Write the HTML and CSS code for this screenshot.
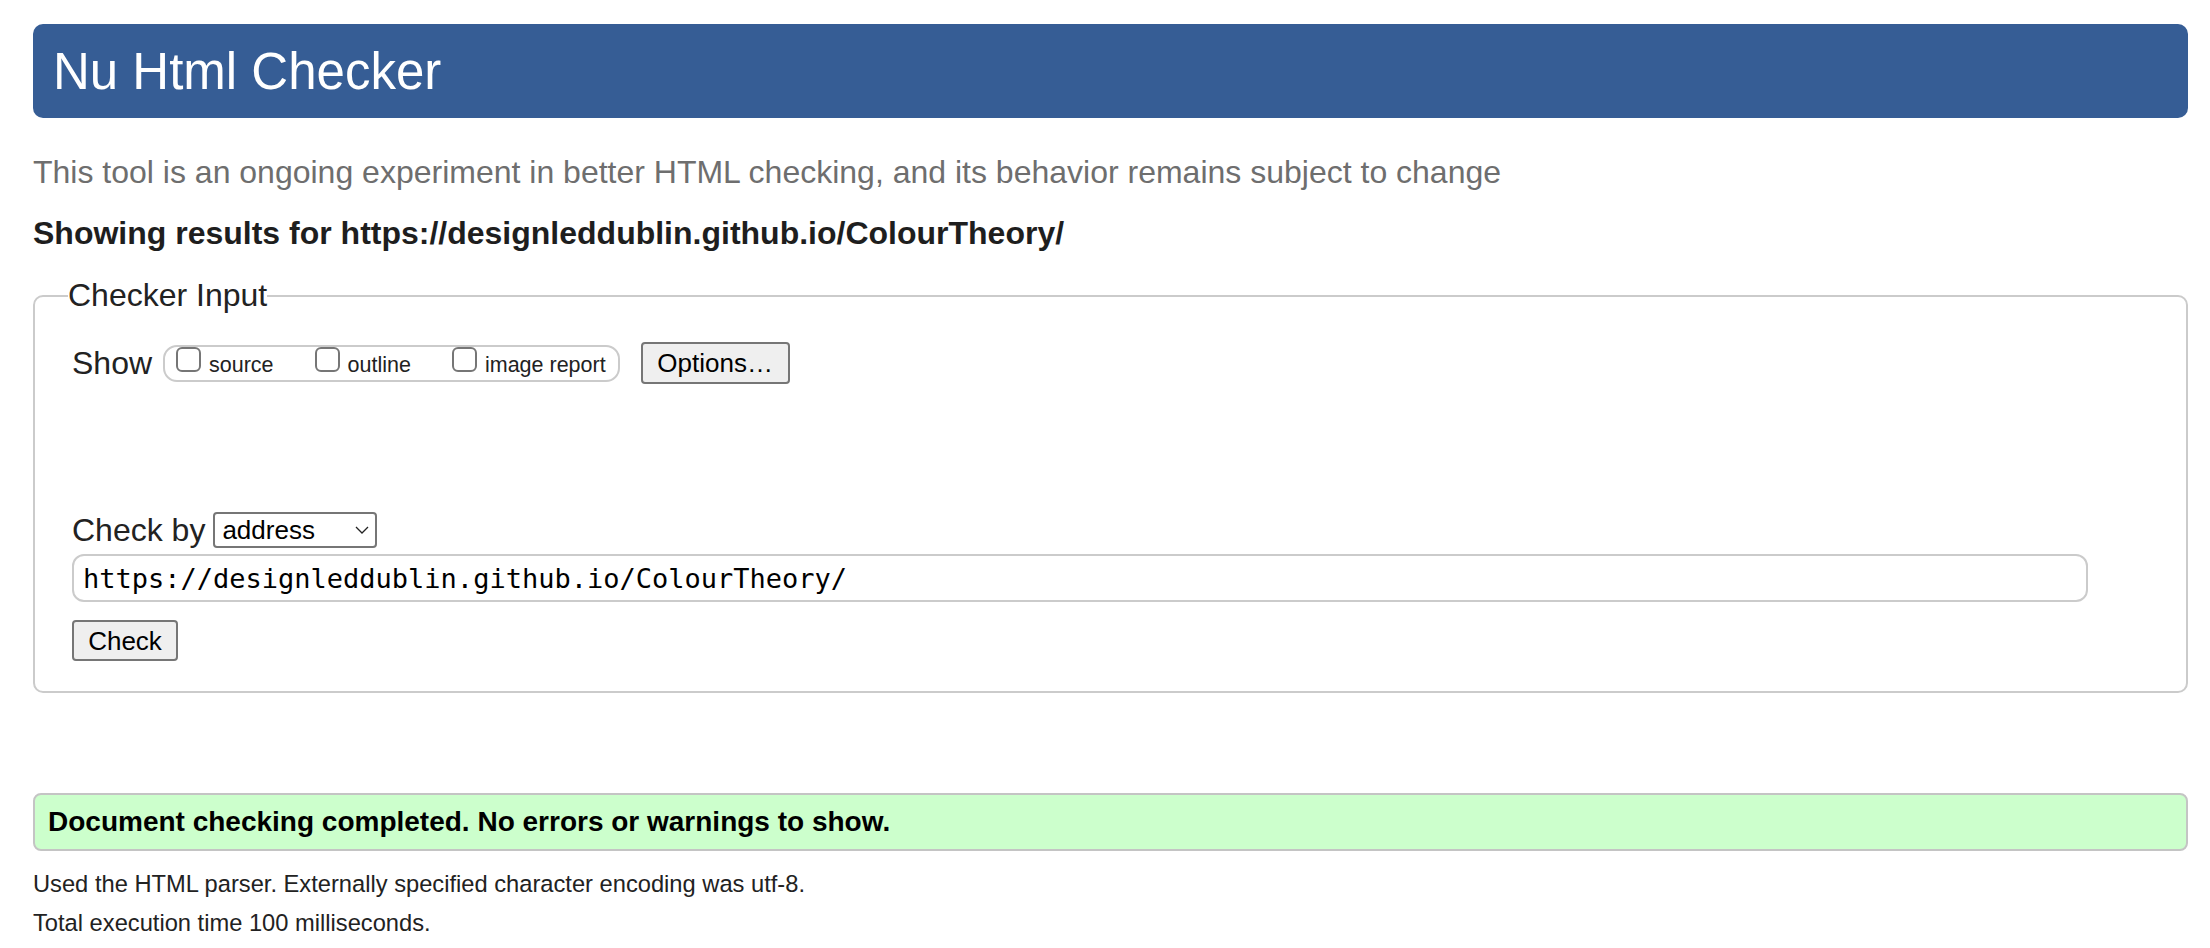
FILE: index.html
```html
<!DOCTYPE html>
<html lang="en">
<head>
<meta charset="utf-8">
<title>Showing results for https://designleddublin.github.io/ColourTheory/ - Nu Html Checker</title>
<link rel="stylesheet" href="styles.css">
</head>
<body>
<div class="page">
  <header class="banner"><h1 class="title">Nu Html Checker</h1></header>
  <p class="tagline">This tool is an ongoing experiment in better HTML checking, and its behavior remains subject to change</p>
  <h2 class="showing">Showing results for https://designleddublin.github.io/ColourTheory/</h2>
  <fieldset class="checker">
    <legend class="legend">Checker Input</legend>
    <div class="show-row">
      <span class="show-label">Show</span>
      <div class="opts">
        <label class="opt"><span class="cb"></span><span class="opt-text">source</span></label>
        <label class="opt"><span class="cb"></span><span class="opt-text">outline</span></label>
        <label class="opt"><span class="cb"></span><span class="opt-text">image report</span></label>
      </div>
      <button class="btn options-btn" type="button">Options…</button>
    </div>
    <div class="checkby-row">
      <span class="checkby-label">Check by</span>
      <div class="select">
        <span class="select-text">address</span>
        <svg class="chev" width="14" height="8" viewBox="0 0 14 8"><polyline points="1,1 7,7 13,1" fill="none" stroke="#222" stroke-width="1.3"/></svg>
      </div>
    </div>
    <div class="url">https://designleddublin.github.io/ColourTheory/</div>
    <button class="btn check-btn" type="button">Check</button>
  </fieldset>
  <div class="success">Document checking completed. No errors or warnings to show.</div>
  <p class="meta used">Used the HTML parser. Externally specified character encoding was utf-8.</p>
  <p class="meta total">Total execution time 100 milliseconds.</p>
</div>
</body>
</html>
```

FILE: styles.css
```css
html, body {
  margin: 0;
  padding: 0;
  background: #ffffff;
}
body {
  font-family: "Liberation Sans", Arial, Helvetica, sans-serif;
  color: #222222;
}
.page {
  padding: 24px 22px 0 33px;
  display: flex;
  flex-direction: column;
  align-items: stretch;
}
.banner {
  height: 94px;
  background: #365d95;
  border-radius: 10px;
  display: flex;
  align-items: center;
  padding-left: 20px;
}
.title {
  margin: 0;
  font-size: 51px;
  font-weight: normal;
  line-height: 1;
  color: #ffffff;
}
.tagline {
  margin: 36px 0 0 0;
  font-size: 32px;
  line-height: 37px;
  color: #6e6e6e;
}
.showing {
  margin: 24px 0 0 0;
  font-size: 32px;
  line-height: 37px;
  font-weight: bold;
  color: #1e1e1e;
}
.checker {
  margin: 25px 0 0 0;
  padding: 0 0 30px 37px;
  border: 2px solid #cbcbcb;
  border-radius: 10px;
  min-width: 0;
}
.legend {
  font-size: 32px;
  line-height: 37px;
  padding: 0;
  margin-left: -4px;
  color: #222222;
}
.show-row {
  margin-top: 28px;
  height: 42px;
  display: flex;
  align-items: center;
}
.show-label {
  font-size: 32px;
  line-height: 37px;
  color: #222222;
}
.opts {
  margin-left: 11px;
  height: 37px;
  box-sizing: border-box;
  border: 2px solid #cbcbcb;
  border-radius: 14px;
  padding: 0 12px 0 11px;
  display: flex;
  align-items: flex-start;
  gap: 41px;
}
.opt {
  display: flex;
  align-items: flex-start;
  gap: 8px;
}
.cb {
  width: 25px;
  height: 25px;
  box-sizing: border-box;
  border: 2px solid #767676;
  border-radius: 6px;
  background: #ffffff;
}
.opt-text {
  margin-top: 8px;
  font-size: 21.5px;
  line-height: 21.5px;
  color: #222222;
}
.btn {
  font-family: "Liberation Sans", Arial, Helvetica, sans-serif;
  font-size: 26px;
  color: #000000;
  background: #efefef;
  border: 2px solid #767676;
  border-radius: 4px;
  box-sizing: border-box;
  padding: 0 14px;
  line-height: 1;
}
.options-btn {
  margin-left: 21px;
  width: 149px;
  height: 42px;
}
.checkby-row {
  margin-top: 128px;
  height: 36px;
  display: flex;
  align-items: center;
  gap: 8px;
}
.checkby-label {
  font-size: 32px;
  line-height: 37px;
  color: #222222;
}
.select {
  width: 164px;
  height: 36px;
  box-sizing: border-box;
  border: 2px solid #767676;
  border-radius: 4px;
  display: flex;
  align-items: center;
  justify-content: space-between;
  padding: 0 6px 0 7px;
  background: #ffffff;
}
.select-text {
  font-size: 26px;
  color: #000000;
}
.chev {
  display: block;
}
.url {
  margin: 6px 98px 0 0;
  height: 48px;
  box-sizing: border-box;
  border: 2px solid #cbcbcb;
  border-radius: 12px;
  padding: 0 9px;
  display: flex;
  align-items: center;
  font-family: "DejaVu Sans Mono", "Liberation Mono", monospace;
  font-size: 27px;
  color: #000000;
}
.check-btn {
  margin-top: 18px;
  width: 106px;
  height: 41px;
  align-self: flex-start;
  display: block;
}
.success {
  margin-top: 100px;
  height: 58px;
  box-sizing: border-box;
  background: #ccffcc;
  border: 2px solid #c4c4c4;
  border-radius: 8px;
  padding-left: 13px;
  display: flex;
  align-items: center;
  font-size: 28px;
  font-weight: bold;
  color: #000000;
}
.meta {
  margin: 0;
  font-size: 23.7px;
  line-height: 28px;
  color: #222222;
}
.used {
  margin-top: 19px;
}
.total {
  margin-top: 11px;
}
```
